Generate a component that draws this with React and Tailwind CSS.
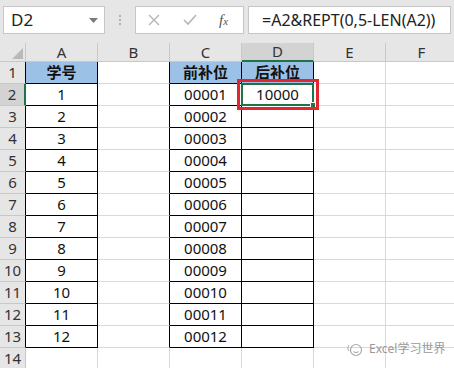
import React from 'react';

const cols = ['A', 'B', 'C', 'D', 'E', 'F'];
const font = { fontFamily: '"Noto Sans", "Noto Sans CJK SC", sans-serif' };

function Toolbar() {
  return (
    <div className="flex h-[43px] items-start bg-[#e6e6e6] pt-[6px]">
      {/* name box */}
      <div className="ml-[3px] flex h-[28px] w-[102px] items-center border border-[#c6c6c6] bg-white pl-[7px] pr-[6px]">
        <span className="flex-1 text-[17px] text-[#222]">D2</span>
        <svg width="9" height="5" viewBox="0 0 9 5"><path d="M0 0h9L4.5 5z" fill="#7a7a7a" /></svg>
      </div>
      <div className="flex h-[28px] w-[30px] flex-col items-center justify-center gap-[2px]">
        <span className="h-[2px] w-[2px] bg-[#b0b0b0]" />
        <span className="h-[2px] w-[2px] bg-[#b0b0b0]" />
        <span className="h-[2px] w-[2px] bg-[#b0b0b0]" />
      </div>
      {/* formula buttons */}
      <div className="flex h-[28px] w-[109px] items-center border border-[#c6c6c6] bg-white">
        <svg className="ml-[12px]" width="12" height="12" viewBox="0 0 12 12"><path d="M1 1l10 10M11 1L1 11" stroke="#b5b5b5" strokeWidth="1.4" /></svg>
        <svg className="ml-[23px]" width="14" height="12" viewBox="0 0 14 12"><path d="M1 6l4 4 8-9" stroke="#b5b5b5" strokeWidth="1.6" fill="none" /></svg>
        <span className="ml-[22px] text-[15px] italic text-[#555]" style={{ fontFamily: '"Liberation Serif", serif' }}>f<span className="text-[11px]">x</span></span>
      </div>
      {/* formula input */}
      <div className="ml-[4px] mr-[3px] flex h-[28px] flex-1 items-center border border-[#c6c6c6] bg-white pl-[13px]">
        <span className="text-[16px] text-[#222]">=A2&amp;REPT(0,5-LEN(A2))</span>
      </div>
    </div>
  );
}

const tableA = ['学号', '1', '2', '3', '4', '5', '6', '7', '8', '9', '10', '11', '12'];
const tableC = ['前补位', '00001', '00002', '00003', '00004', '00005', '00006', '00007', '00008', '00009', '00010', '00011', '00012'];
const tableD = ['后补位', '10000', '', '', '', '', '', '', '', '', '', '', ''];

function Cell({ r, c }) {
  const inTable = r >= 1 && r <= 13 && (c === 'A' || c === 'C' || c === 'D');
  const header = r === 1 && inTable;
  const active = r === 2 && c === 'D';
  let text = '';
  if (inTable) {
    if (c === 'A') text = tableA[r - 1];
    if (c === 'C') text = tableC[r - 1];
    if (c === 'D') text = tableD[r - 1];
  }
  // right border black when this cell or the next cell is in the table
  const nextInTable = r >= 1 && r <= 13 && c === 'B';
  const rightBlack = inTable || nextInTable;
  const bottomBlack = inTable;
  return (
    <div
      className={`relative flex items-center justify-center border-r border-b text-[15px] text-[#111] ${
        rightBlack ? 'border-r-black' : 'border-r-[#d9d9d9]'
      } ${bottomBlack ? 'border-b-black' : 'border-b-[#d9d9d9]'} ${
        header ? 'bg-[#9bc2e6] font-bold' : 'bg-white'
      } ${active ? 'z-10' : ''}`}
    >
      {text}
      {active && (
        <>
          <div className="absolute left-[-1px] top-[-1px] h-[23px] w-[73px] border-2 border-[#217346]" />
          <div className="absolute bottom-[-3px] right-[-3px] h-[6px] w-[6px] border border-white bg-[#217346]" />
          <div className="absolute left-[-5px] top-[-5px] h-[31px] w-[82px] border-[3px] border-[#e0262e]" />
        </>
      )}
    </div>
  );
}

function Sheet() {
  const rows = Array.from({ length: 14 }, (_, i) => i + 1);
  return (
    <div className="grid grid-cols-[26px_repeat(6,72px)] grid-rows-[19px_repeat(14,22px)]">
      <div className="flex items-end justify-end border-r border-b border-[#c8c8c8] bg-[#e6e6e6] p-[2px]">
        <svg width="11" height="11" viewBox="0 0 11 11"><path d="M11 0v11H0z" fill="#b9b9b9" /></svg>
      </div>
      {cols.map((c) => (
        <div
          key={c}
          className={`flex items-center justify-center border-r text-[15px] text-[#333] ${
            c === 'D'
              ? 'border-b-2 border-r-[#c8c8c8] border-b-[#217346] bg-[#d3d3d3]'
              : 'border-b border-[#c8c8c8] bg-[#e6e6e6]'
          }`}
        >
          {c}
        </div>
      ))}
      {rows.map((r) => (
        <React.Fragment key={r}>
          <div
            className={`flex items-center justify-center border-b border-b-[#c8c8c8] text-[15px] text-[#333] ${
              r === 2
                ? 'border-r-2 border-r-[#217346] bg-[#d3d3d3]'
                : r <= 13
                ? 'border-r border-r-black bg-[#e6e6e6]'
                : 'border-r border-r-[#c8c8c8] bg-[#e6e6e6]'
            }`}
          >
            {r}
          </div>
          {cols.map((c) => (
            <Cell key={c} r={r} c={c} />
          ))}
        </React.Fragment>
      ))}
    </div>
  );
}

export default function App() {
  return (
    <div className="relative h-[368px] w-[454px] overflow-hidden bg-white" style={font}>
      <Toolbar />
      <Sheet />
      {/* watermark */}
      <div className="absolute left-[345px] top-[340px] flex items-center gap-[4px] text-[12px] text-[#9a9a9a]">
        <svg width="20" height="16" viewBox="0 0 20 16">
          <path d="M4 4a5 5 0 0 0 0 6" stroke="#bbb" strokeWidth="1.2" fill="none" />
          <circle cx="11" cy="9" r="5.5" stroke="#aaa" strokeWidth="1.2" fill="none" />
          <path d="M8.5 10.5q2.5 2 5 0" stroke="#aaa" strokeWidth="1.1" fill="none" />
        </svg>
        <span>Excel学习世界</span>
      </div>
    </div>
  );
}
